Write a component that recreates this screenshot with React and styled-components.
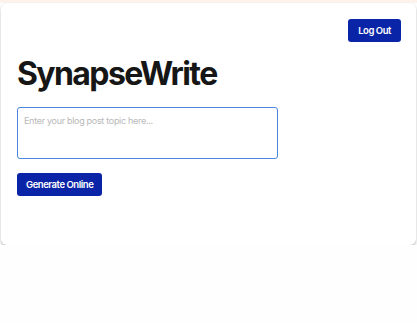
import React from 'react';
import styled, { createGlobalStyle } from 'styled-components';

const GlobalStyle = createGlobalStyle`
  html, body {
    margin: 0;
    padding: 0;
    background: #fefefe;
    font-family: Inter, "Noto Sans", sans-serif;
  }
`;

const Page = styled.div`
  border-top: 3px solid #fcf3ec;
  padding-left: 1px;
`;

const Card = styled.div`
  width: 415px;
  box-sizing: border-box;
  padding: 16px 15px 49px 16px;
  background: #fff;
  border-radius: 6px;
  box-shadow: 0 2px 3px rgba(0, 0, 0, 0.24), 0 0 1px rgba(0, 0, 0, 0.08);
`;

const TopBar = styled.div`
  display: flex;
  justify-content: flex-end;
`;

const Button = styled.button`
  height: 23px;
  padding: 0 ${p => (p.wide ? 9 : 10)}px;
  border: none;
  border-radius: 3px;
  background: #0a24a8;
  color: #fff;
  font-family: Inter, sans-serif;
  font-weight: 600;
  font-size: 9.5px;
  letter-spacing: -0.45px;
  cursor: pointer;
`;

const Title = styled.h1`
  margin: 13px 0 14px;
  font-size: 32px;
  line-height: 38px;
  font-weight: 700;
  color: #161616;
  letter-spacing: -1.6px;
`;

const Topic = styled.textarea`
  display: block;
  width: 261px;
  height: 52px;
  box-sizing: border-box;
  padding: 7px 6px;
  border: 1px solid #4b84dc;
  border-radius: 3px;
  font-family: Inter, sans-serif;
  font-size: 9px;
  letter-spacing: -0.3px;
  resize: none;
  outline: none;
  &::placeholder {
    color: #b8b8b8;
  }
`;

const Actions = styled.div`
  margin-top: 13px;
`;

export default function App() {
  return (
    <>
      <GlobalStyle />
      <Page>
        <Card>
          <TopBar>
            <Button>Log Out</Button>
          </TopBar>
          <Title>SynapseWrite</Title>
          <Topic placeholder="Enter your blog post topic here..." />
          <Actions>
            <Button wide>Generate Online</Button>
          </Actions>
        </Card>
      </Page>
    </>
  );
}
